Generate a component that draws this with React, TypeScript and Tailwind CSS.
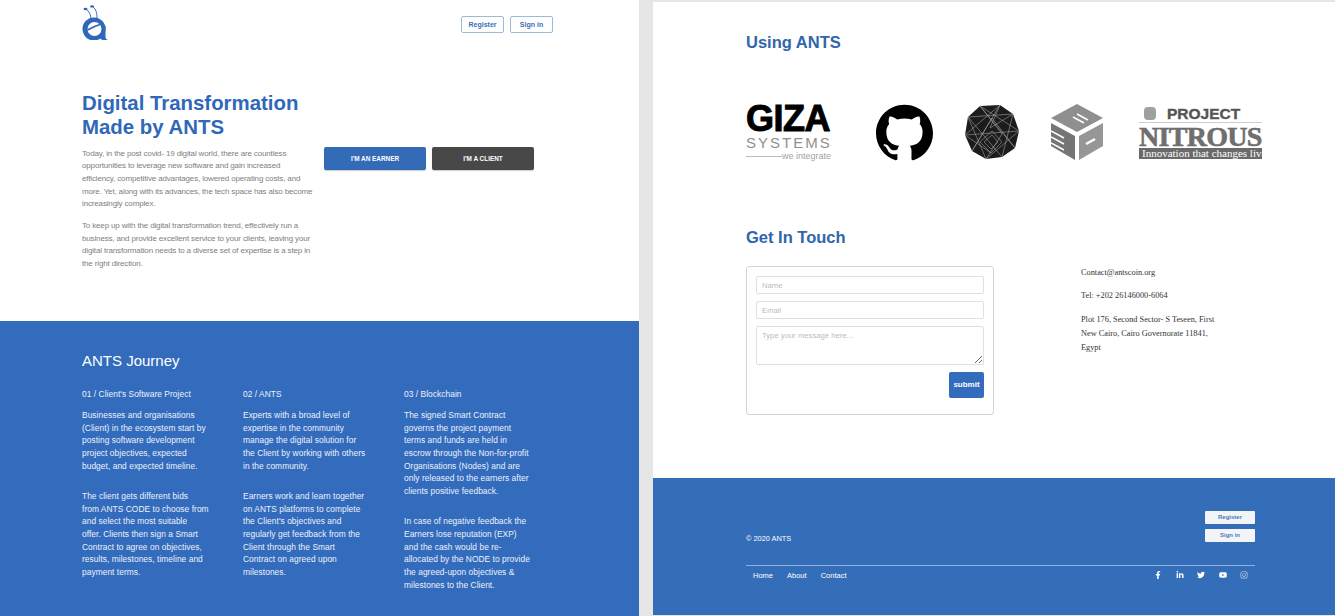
import { SiGithub } from 'react-icons/si';
import { FaFacebookF, FaLinkedinIn, FaTwitter, FaYoutube, FaInstagram } from 'react-icons/fa';

const journey = [
  {
    title: "01 / Client's Software Project",
    paragraphs: [
      'Businesses and organisations\n(Client) in the ecosystem start by\nposting software development\nproject objectives, expected\nbudget, and expected timeline.',
      'The client gets different bids\nfrom ANTS CODE to choose from\nand select the most suitable\noffer. Clients then sign a Smart\nContract to agree on objectives,\nresults, milestones, timeline and\npayment terms.',
    ],
  },
  {
    title: '02 / ANTS',
    paragraphs: [
      'Experts with a broad level of\nexpertise in the community\nmanage the digital solution for\nthe Client by working with others\nin the community.',
      "Earners work and learn together\non ANTS platforms to complete\nthe Client's objectives and\nregularly get feedback from the\nClient through the Smart\nContract on agreed upon\nmilestones.",
    ],
  },
  {
    title: '03 / Blockchain',
    paragraphs: [
      'The signed Smart Contract\ngoverns the project payment\nterms and funds are held in\nescrow through the Non-for-profit\nOrganisations (Nodes) and are\nonly released to the earners after\nclients positive feedback.',
      'In case of negative feedback the\nEarners lose reputation (EXP)\nand the cash would be re-\nallocated by the NODE to provide\nthe agreed-upon objectives &\nmilestones to the Client.',
    ],
  },
];

function AntsLogo() {
  return (
    <svg width="28" height="36" viewBox="0 0 28 36" className="block">
      <path d="M9 15 C9 11 7 7 4 5" fill="none" stroke="#3a6fbc" strokeWidth="1" />
      <path d="M15 14 C15 9 14 5 11 3" fill="none" stroke="#3a6fbc" strokeWidth="1" />
      <ellipse cx="3.500" cy="5" rx="2" ry="1.200" fill="#2f68b8" />
      <ellipse cx="10" cy="2.400" rx="2" ry="1.200" fill="#2f68b8" />
      <circle cx="12" cy="25" r="11.500" fill="#2f68b8" />
      <path d="M18 22 L23.500 22 L23.500 33 C23.500 34.500 24.500 35.500 26 36 L21 36 C19.500 36 18.500 35 17.500 33 Z" fill="#2f68b8" />
      <ellipse cx="12.500" cy="25" rx="7" ry="7" fill="#ffffff" />
      <path d="M5.500 26 C9 24 13 22 18 20.500" fill="none" stroke="#2f68b8" strokeWidth="1.800" />
    </svg>
  );
}

function CrystalLogo() {
  const outer = '16,2 36,1 49,10 55,27 51,44 38,53 22,55 8,47 1,31 4,13';
  const lines = [
    'M16 2 L38 30 L22 55',
    'M36 1 L8 47',
    'M49 10 L4 13 L38 53',
    'M55 27 L1 31',
    'M51 44 L16 2',
    'M28 27 L38 38 L27 49 L16 38 Z',
    'M28 31 L34 38 L27 45 L20 38 Z',
    'M36 1 L26 24 L49 10',
    'M8 47 L28 14 L51 44',
    'M22 55 L55 27',
    'M1 31 L27 49',
    'M4 13 L22 55',
    'M16 2 L55 27',
    'M38 53 L49 10',
    'M1 31 L36 1',
  ];
  return (
    <svg width="56" height="56" viewBox="0 0 56 56" className="block">
      <polygon points={outer} fill="#1c1c1c" />
      {lines.map((d) => (
        <path key={d} d={d} fill="none" stroke="#a0a0a0" strokeWidth="0.6" />
      ))}
    </svg>
  );
}

function BoxLogo() {
  return (
    <svg width="53" height="56" viewBox="0 0 53 56" className="block">
      <polygon points="26,0 52,14 26,28 0,14" fill="#8f8f8f" />
      <polygon points="0,19 24,32 24,56 0,42" fill="#757575" />
      <polygon points="52,19 28,32 28,56 52,42" fill="#969696" />
      <path d="M22 13 L33 19 M26 10 L37 16" stroke="#ffffff" strokeWidth="1.500" />
      <path d="M0 27 L13 34 M0 33 L13 40 M0 39 L13 46" stroke="#ffffff" strokeWidth="1.500" />
      <path d="M35 40 L44 35" stroke="#ffffff" strokeWidth="2.500" />
    </svg>
  );
}

function GizaLogo() {
  return (
    <div className="flex h-[56px] w-[85px] flex-col pt-[1px] font-['Liberation_Sans',sans-serif]">
      <span className="h-[27px] text-[36px] leading-[27px] font-bold tracking-[-0.5px] text-black [-webkit-text-stroke:1px_black]">
        GIZA
      </span>
      <span className="mt-[3px] h-[15px] text-[15px] leading-[15px] tracking-[2px] text-[#909090]">SYSTEMS</span>
      <div className="mt-px flex items-center">
        <span className="h-px w-[36px] shrink-0 bg-[#bbbbbb]" />
        <span className="ml-auto text-[9px] leading-[10px] whitespace-nowrap text-[#a3a3a3]">we integrate</span>
      </div>
    </div>
  );
}

function NitrousLogo() {
  return (
    <div className="h-[56px] w-[123px] overflow-hidden pt-[1px] font-['Liberation_Serif',serif]">
      <div className="flex h-[18px] items-center border-b border-[#cccccc] pl-[5px]">
        <span className="mr-[11px] h-[13px] w-[12px] rounded-sm bg-[#a0a0a0]" />
        <span className="font-['Liberation_Sans',sans-serif] text-[15.5px] leading-[16px] font-bold text-[#555555] [-webkit-text-stroke:0.4px_#555555]">
          PROJECT
        </span>
      </div>
      <div className="mt-[3px] h-[21px] text-[28px] leading-[21px] font-bold tracking-[-0.7px] whitespace-nowrap text-[#6f6f6f] [-webkit-text-stroke:0.6px_#6f6f6f]">
        NITROUS
      </div>
      <div className="mt-[1px] h-[11px] bg-[#6a6a6a] pl-[3px] text-[11px] leading-[11px] whitespace-nowrap text-white">
        Innovation that changes lives
      </div>
    </div>
  );
}

export default function App() {
  return (
    <div className="flex h-[616px] w-[1335px] overflow-hidden bg-[#e6e6e6] font-['Liberation_Sans',sans-serif]">
      {/* Left page */}
      <div className="flex w-[639px] flex-col">
        <section className="h-[321px] bg-white pl-[82px]">
          <header className="flex h-[43px] w-[471px] items-start justify-between pt-[4px]">
            <AntsLogo />
            <div className="mt-[12px] flex gap-[6px]">
              <button className="h-[17px] w-[43px] rounded-[2px] border border-[#9dbad9] text-[7px] leading-[15px] font-bold text-[#3a6fb5]">
                Register
              </button>
              <button className="h-[17px] w-[43px] rounded-[2px] border border-[#9dbad9] text-[7px] leading-[15px] font-bold text-[#3a6fb5]">
                Sign in
              </button>
            </div>
          </header>

          <div className="mt-[48px] flex">
            <div className="w-[232px]">
              <h1 className="text-[20.4px] leading-[24px] font-bold whitespace-nowrap text-[#2f68b8]">
                Digital Transformation
                <br />
                Made by ANTS
              </h1>
              <p className="mt-[8.5px] w-[231px] text-[8px] leading-[12.67px] tracking-[-0.15px] text-[#808080]">
                Today, in the post covid- 19 digital world, there are countless opportunities to leverage new software and gain increased efficiency, competitive advantages, lowered operating costs, and more. Yet, along with its advances, the tech space has also become increasingly complex.
              </p>
              <p className="mt-[9px] w-[231px] text-[8px] leading-[12.67px] tracking-[-0.15px] text-[#808080]">
                To keep up with the digital transformation trend, effectively run a business, and provide excellent service to your clients, leaving your digital transformation needs to a diverse set of expertise is a step in the right direction.
              </p>
            </div>
            <div className="mt-[56px] ml-[10px] flex gap-[6px]">
              <button className="h-[23px] w-[102px] rounded-[2px] bg-[#336bb7] text-[6.4px] font-bold text-white shadow-[0_1px_1px_rgba(0,0,0,0.2)]">
                I'M AN EARNER
              </button>
              <button className="h-[23px] w-[102px] rounded-[2px] bg-[#484848] text-[6.4px] font-bold text-white shadow-[0_1px_1px_rgba(0,0,0,0.2)]">
                I'M A CLIENT
              </button>
            </div>
          </div>
        </section>

        <section className="flex-1 bg-[#336bbd] pt-[30px] pl-[82px] text-[#edf2fa]">
          <h2 className="text-[15px] leading-[20px] text-white">ANTS Journey</h2>
          <div className="mt-[17px] flex gap-[34px]">
            {journey.map((col) => (
              <div key={col.title} className="w-[127px]">
                <h3 className="text-[8.4px] leading-[12px] tracking-[0.05px]">{col.title}</h3>
                <div className="mt-[9px] flex flex-col gap-[17.5px]">
                  {col.paragraphs.map((p) => (
                    <p key={p} className="text-[8.4px] leading-[12.67px] tracking-[0.05px] whitespace-pre-line">
                      {p}
                    </p>
                  ))}
                </div>
              </div>
            ))}
          </div>
        </section>
      </div>

      {/* Right page */}
      <div className="mt-[2px] ml-[14px] flex w-[682px] flex-col pb-px">
        <section className="h-[476px] bg-white pl-[93px]">
          <h2 className="pt-[30px] text-[16.5px] leading-[20px] font-bold text-[#2f65ad]">Using ANTS</h2>
          <div className="mt-[52px] flex h-[56px] items-center">
            <GizaLogo />
            <SiGithub className="ml-[45px] h-[57px] w-[57px] text-black" />
            <div className="ml-[31px]">
              <CrystalLogo />
            </div>
            <div className="ml-[31px]">
              <BoxLogo />
            </div>
            <div className="ml-[35px]">
              <NitrousLogo />
            </div>
          </div>

          <h2 className="mt-[67px] text-[16.5px] leading-[20px] font-bold text-[#2f65ad]">Get In Touch</h2>
          <div className="mt-[19px] flex">
            <form className="flex h-[149px] w-[248px] flex-col gap-[7px] rounded-[3px] border border-[#d4d4d4] px-[9px] pt-[9px]">
              <input
                placeholder="Name"
                className="h-[18px] w-full rounded-[2px] border border-[#e0e0e0] px-[5px] text-[7.7px] outline-none placeholder:text-[#bdbdbd]"
              />
              <input
                placeholder="Email"
                className="h-[18px] w-full rounded-[2px] border border-[#e0e0e0] px-[5px] text-[7.7px] outline-none placeholder:text-[#bdbdbd]"
              />
              <textarea
                placeholder="Type your message here..."
                className="block h-[39px] w-full rounded-[2px] border border-[#e0e0e0] px-[5px] py-[3px] text-[7.7px] outline-none placeholder:text-[#bdbdbd]"
              />
              <button
                type="button"
                className="h-[25.5px] w-[35px] self-end rounded-[2px] bg-[#336bbd] text-[8px] font-bold text-white"
              >
                submit
              </button>
            </form>
            <div className="ml-[87px] w-[140px] pt-[1px] font-['Liberation_Serif',serif] text-[8.3px] text-[#333333]">
              <p className="leading-[12px]">Contact@antscoin.org</p>
              <p className="mt-[11px] leading-[12px]">Tel: +202 26146000-6064</p>
              <p className="mt-[11px] leading-[13.8px]">Plot 176, Second Sector- S Teseen, First New Cairo, Cairo Governorate 11841, Egypt</p>
            </div>
          </div>
        </section>

        <footer className="flex-1 bg-[#356eb8] pt-[33px] pl-[93px] text-white">
          <div className="flex h-[46px] w-[509px] items-start justify-between">
            <span className="mt-[22px] text-[7.4px] leading-[12px]">© 2020 ANTS</span>
            <div className="flex flex-col gap-[5px]">
              <button className="h-[13px] w-[50px] rounded-[1px] bg-[#f2f4f7] text-[6px] font-bold text-[#4a7abb]">
                Register
              </button>
              <button className="h-[13px] w-[50px] rounded-[1px] bg-[#f2f4f7] text-[6px] font-bold text-[#4a7abb]">
                Sign in
              </button>
            </div>
          </div>
          <div className="mt-[8px] flex w-[509px] items-start justify-between border-t border-[#8fb2de] pt-[4px]">
            <nav className="flex gap-[14px] pl-[7px] text-[7.5px] leading-[11px]">
              <a>Home</a>
              <a>About</a>
              <a>Contact</a>
            </nav>
            <div className="flex items-center gap-[13.5px] pt-[1px] pr-[7px] text-[8px]">
              <FaFacebookF />
              <FaLinkedinIn />
              <FaTwitter />
              <FaYoutube />
              <FaInstagram className="opacity-70" />
            </div>
          </div>
        </footer>
      </div>
    </div>
  );
}
